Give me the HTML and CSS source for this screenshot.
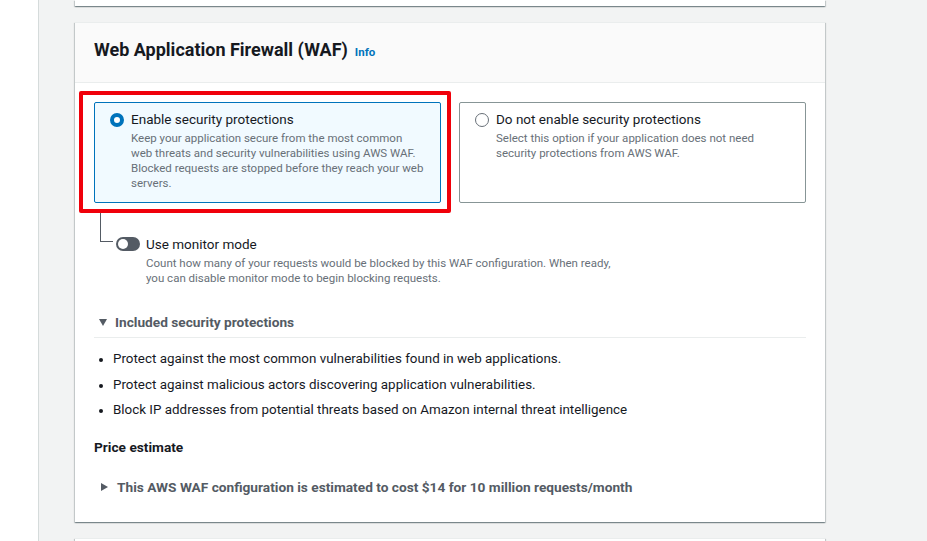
FILE: index.html
```html
<!DOCTYPE html>
<html>
<head>
<meta charset="utf-8">
<link rel="stylesheet" href="styles.css">
</head>
<body>
<div class="page">
  <div class="side"></div>
  <main class="main">
    <div class="card prev"></div>
    <section class="card waf">
      <header class="card-head">
        <h2>Web Application Firewall (WAF)</h2>
        <a class="info">Info</a>
      </header>
      <div class="card-body">
        <div class="tiles">
          <div class="highlight">
            <div class="tile selected">
              <span class="radio on"></span>
              <div class="tile-text">
                <div class="tile-label">Enable security protections</div>
                <div class="tile-desc">Keep your application secure from the most common web threats and security vulnerabilities using AWS WAF. Blocked requests are stopped before they reach your web servers.</div>
              </div>
            </div>
          </div>
          <div class="tile plain">
            <span class="radio"></span>
            <div class="tile-text">
              <div class="tile-label">Do not enable security protections</div>
              <div class="tile-desc">Select this option if your application does not need security protections from AWS WAF.</div>
            </div>
          </div>
        </div>
        <div class="monitor">
          <div class="connector"></div>
          <span class="toggle"><span class="knob"></span></span>
          <div class="monitor-text">
            <div class="tile-label">Use monitor mode</div>
            <div class="tile-desc">Count how many of your requests would be blocked by this WAF configuration. When ready, you can disable monitor mode to begin blocking requests.</div>
          </div>
        </div>
        <div class="expander open">
          <span class="caret down"></span>Included security protections
        </div>
        <ul class="bullets">
          <li>Protect against the most common vulnerabilities found in web applications.</li>
          <li>Protect against malicious actors discovering application vulnerabilities.</li>
          <li>Block IP addresses from potential threats based on Amazon internal threat intelligence</li>
        </ul>
        <div class="price-title">Price estimate</div>
        <div class="expander closed">
          <span class="caret right"></span>This AWS WAF configuration is estimated to cost $14 for 10 million requests/month
        </div>
      </div>
    </section>
    <div class="card next"></div>
  </main>
</div>
</body>
</html>
```
FILE: styles.css
```css
* { box-sizing: border-box; }
html, body { margin: 0; padding: 0; }
body {
  font-family: Roboto, "Liberation Sans", Arial, sans-serif;
  color: #16191f;
  background: #f2f3f3;
  width: 927px;
  height: 541px;
  overflow: hidden;
}
.page { display: flex; height: 541px; }
.side {
  width: 39px;
  flex: none;
  background: #ffffff;
  border-right: 1px solid #d5dbdb;
}
.main {
  flex: none;
  width: 750px;
  margin-left: 36px;
  display: flex;
  flex-direction: column;
}
.card {
  flex: none;
  background: #ffffff;
  box-shadow: 0 1px 1px 0 rgba(0,28,36,0.3), 1px 1px 1px 0 rgba(0,28,36,0.15), -1px 1px 1px 0 rgba(0,28,36,0.15);
  border-top: 1px solid #eaeded;
}
.prev { height: 6px; border-top: none; }
.waf { margin-top: 16px; height: 500px; }
.next { margin-top: 16px; height: 20px; }
.card-head {
  background: #fafafa;
  height: 60px;
  border-bottom: 1px solid #eaeded;
  display: flex;
  align-items: baseline;
  padding: 16px 19px 0;
}
.card-head h2 {
  margin: 0;
  font-size: 18px;
  font-weight: 700;
  line-height: 22px;
  color: #16191f;
}
.info {
  margin-left: 7px;
  font-size: 11.5px;
  font-weight: 700;
  color: #0073bb;
}
.card-body { padding: 8px 19px 0 19px; }
.tiles { display: flex; gap: 8px; align-items: flex-start; }
.highlight {
  margin-left: -15px;
  border: 4px solid #f0000a;
  border-radius: 2px;
  padding: 7px 7px 6px 11px;
  width: 372px;
}
.tile {
  display: flex;
  height: 101px;
  padding: 7px 16px 0 15px;
  border-radius: 2px;
}
.selected {
  background: #f1faff;
  border: 1px solid #0073bb;
  width: 347px;
}
.plain {
  margin-top: 11px;
  border: 1px solid #879596;
  width: 347px;
}
.radio {
  flex: none;
  width: 14px;
  height: 14px;
  border-radius: 50%;
  border: 1.5px solid #687078;
  background: #fff;
  margin-top: 3px;
  margin-right: 7px;
}
.radio.on {
  border: 4px solid #0073bb;
  background: #fff;
}
.tile-label { font-size: 13.5px; line-height: 18px; color: #16191f; }
.tile-desc { font-size: 11.5px; line-height: 15px; color: #687078; margin-top: 3px; }
.monitor {
  display: flex;
  margin-left: 6px;
  height: 100px;
}
.connector {
  width: 13px;
  height: 29px;
  border-left: 1px solid #545b64;
  border-bottom: 1px solid #545b64;
  flex: none;
}
.toggle {
  flex: none;
  margin-top: 24px;
  margin-left: 3px;
  width: 24px;
  height: 14px;
  border-radius: 7px;
  background: #545b64;
  position: relative;
}
.knob {
  position: absolute;
  left: 2px;
  top: 2px;
  width: 10px;
  height: 10px;
  border-radius: 50%;
  background: #fff;
}
.monitor-text { margin-left: 6px; margin-top: 22px; width: 480px; }
.monitor-text .tile-desc { margin-top: 3px; }
.expander {
  font-size: 13.7px;
  font-weight: 700;
  color: #545b64;
  display: flex;
  align-items: center;
  line-height: 18px;
}
.expander.open {
  padding-left: 5px;
  padding-bottom: 6px;
  border-bottom: 1px solid #eaeded;
}
.caret { flex: none; width: 0; height: 0; margin-right: 8px; }
.caret.down {
  border-left: 4.5px solid transparent;
  border-right: 4.5px solid transparent;
  border-top: 7px solid #545b64;
}
.caret.right {
  border-top: 4.5px solid transparent;
  border-bottom: 4.5px solid transparent;
  border-left: 7px solid #545b64;
  margin-right: 9px;
}
.expander.closed { padding-left: 7px; margin-top: 22px; }
.bullets {
  margin: 12px 0 0;
  padding-left: 19px;
  font-size: 13.4px;
  line-height: 18px;
  color: #16191f;
}
.bullets li { margin-bottom: 7.5px; }
.bullets li::marker { font-size: 12px; }
.price-title {
  margin-top: 19px;
  font-size: 13.7px;
  font-weight: 700;
  line-height: 18px;
}
```
